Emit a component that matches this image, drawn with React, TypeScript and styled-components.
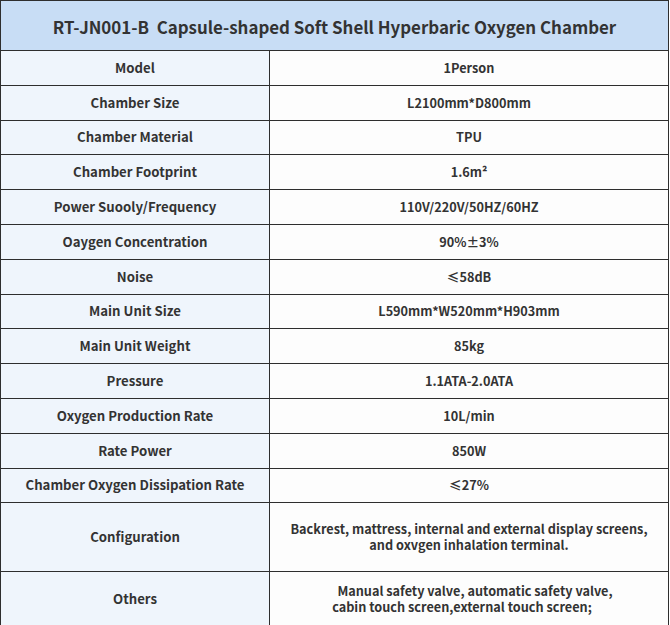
import React from "react";
import styled, { createGlobalStyle } from "styled-components";

const Global = createGlobalStyle`
  html, body { margin: 0; padding: 0; background: #ffffff; }
  body { font-family: "Noto Sans CJK SC", "Noto Sans", sans-serif; color: #333333; }
`;

const Table = styled.div`
  display: grid;
  grid-template-columns: 269px 399px;
  width: 669px;
  border-top: 1px solid #2e2e2e;
  border-left: 1px solid #2e2e2e;
  box-sizing: border-box;
`;

const Title = styled.div`
  grid-column: 1 / span 2;
  height: 50px;
  box-sizing: border-box;
  background: #c8ddf5;
  border-right: 1px solid #2e2e2e;
  border-bottom: 1px solid #2e2e2e;
  display: flex;
  align-items: center;
  justify-content: center;
  font-size: 16.9px;
  font-weight: 700;
  color: #333;
  white-space: pre;
  padding-top: 1px;
`;

const Cell = styled.div<{ $label?: boolean; $h: number }>`
  height: ${(p) => p.$h}px;
  box-sizing: border-box;
  background: ${(p) => (p.$label ? "#eff5fc" : "#fdfdfd")};
  border-right: 1px solid #2e2e2e;
  border-bottom: 1px solid #2e2e2e;
  display: flex;
  flex-direction: column;
  align-items: center;
  justify-content: center;
  text-align: center;
  font-size: ${(p) => (p.$label ? "13.2px" : "12.7px")};
  font-weight: 600;
  line-height: 16px;
  color: #333;
`;

const Line = styled.span<{ $shift?: number }>`
  display: block;
  white-space: nowrap;
  transform: translateX(${(p) => p.$shift ?? 0}px);
`;

type Row = { label: string; value: React.ReactNode; h?: number };

const rows: Row[] = [
  { label: "Model", value: "1Person" },
  { label: "Chamber Size", value: "L2100mm*D800mm" },
  { label: "Chamber Material", value: "TPU" },
  { label: "Chamber Footprint", value: "1.6m²" },
  { label: "Power Suooly/Frequency", value: "110V/220V/50HZ/60HZ" },
  { label: "Oaygen Concentration", value: "90%±3%" },
  { label: "Noise", value: "≤58dB" },
  { label: "Main Unit Size", value: "L590mm*W520mm*H903mm" },
  { label: "Main Unit Weight", value: "85kg" },
  { label: "Pressure", value: "1.1ATA-2.0ATA" },
  { label: "Oxygen Production Rate", value: "10L/min" },
  { label: "Rate Power", value: "850W" },
  { label: "Chamber Oxygen Dissipation Rate", value: "≤27%" },
  {
    label: "Configuration",
    h: 69,
    value: (
      <>
        <Line>Backrest, mattress, internal and external display screens,</Line>
        <Line>and oxvgen inhalation terminal.</Line>
      </>
    ),
  },
  {
    label: "Others",
    h: 54,
    value: (
      <>
        <Line $shift={6}>Manual safety valve, automatic safety valve,</Line>
        <Line $shift={-7}>cabin touch screen,external touch screen;</Line>
      </>
    ),
  },
];

export default function App() {
  return (
    <>
      <Global />
      <Table>
        <Title>{"RT-JN001-B  Capsule-shaped Soft Shell Hyperbaric Oxygen Chamber"}</Title>
        {rows.map((r, i) => {
          const h = r.h ?? 34.8;
          return (
            <React.Fragment key={i}>
              <Cell $label $h={h}>{r.label}</Cell>
              <Cell $h={h}>{r.value}</Cell>
            </React.Fragment>
          );
        })}
      </Table>
    </>
  );
}
